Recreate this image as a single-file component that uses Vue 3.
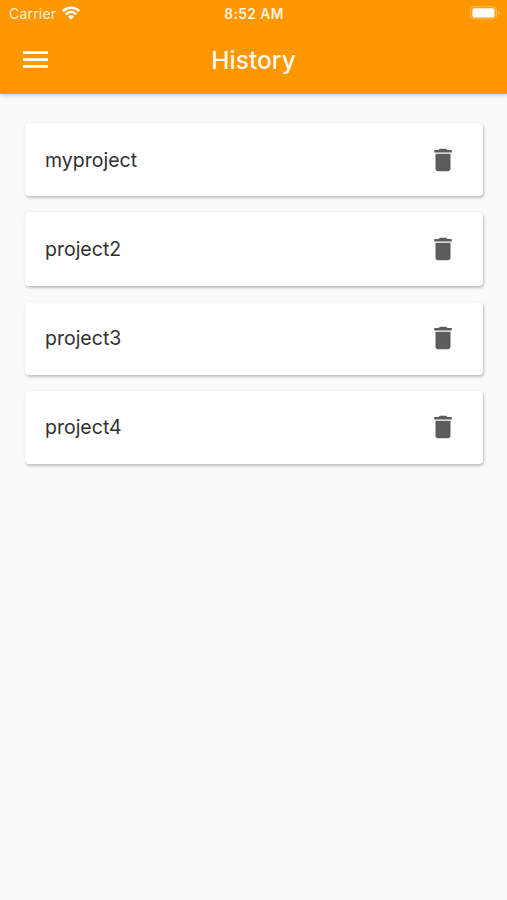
<script setup>
import { ref } from 'vue'

const projects = ref(['myproject', 'project2', 'project3', 'project4'])

function remove(index) {
  projects.value.splice(index, 1)
}
</script>

<template>
  <div class="screen">
    <header class="header">
      <div class="status">
        <div class="carrier">
          <span class="carrier-name">Carrier</span>
          <svg class="wifi" viewBox="0 0 18 14" fill="none" stroke="#fff" stroke-width="2.5">
            <path d="M0.9 5.1a11.5 11.5 0 0 1 16.2 0" />
            <path d="M3.8 8.3a7.3 7.3 0 0 1 10.4 0" />
            <path d="M9 13.8 6 10.8a4.3 4.3 0 0 1 6 0z" fill="#fff" stroke="none" />
          </svg>
        </div>
        <span class="time">8:52 AM</span>
        <div class="power">
          <svg class="battery" viewBox="0 0 30 14">
            <rect x="0.6" y="0.6" width="25.8" height="12.4" rx="3.6" fill="none" stroke="#fff" stroke-opacity="0.32" stroke-width="1.1" />
            <rect x="2.4" y="2.2" width="22.2" height="9.4" rx="1.8" fill="#fff" />
            <path d="M27.8 4.8v4q1.8-.6 1.8-2t-1.8-2z" fill="#fff" fill-opacity="0.35" />
          </svg>
        </div>
      </div>
      <div class="toolbar">
        <button class="menu" aria-label="Menu">
          <svg viewBox="0 0 24 24"><path d="M3 18h18v-2H3v2zm0-5h18v-2H3v2zm0-7v2h18V6H3z" /></svg>
        </button>
        <h1 class="title">History</h1>
      </div>
    </header>
    <main class="list">
      <div v-for="(project, index) in projects" :key="project" class="card">
        <span class="name">{{ project }}</span>
        <button class="delete" aria-label="Delete" @click="remove(index)">
          <svg viewBox="0 0 24 24"><path d="M6 19c0 1.1.9 2 2 2h8c1.1 0 2-.9 2-2V7H6v12zM19 4h-3.5l-1-1h-5l-1 1H5v2h14V4z" /></svg>
        </button>
      </div>
    </main>
  </div>
</template>

<style>
body {
  background: #fafafa;
}
</style>

<style scoped>
.screen {
  min-height: 900px;
  background: #fafafa;
  font-family: Inter, "Liberation Sans", sans-serif;
}
.header {
  height: 93.5px;
  background: #ff9800;
  color: #fff;
  box-shadow: 0 1px 5px rgba(0, 0, 0, 0.24);
}
.status {
  height: 27px;
  padding: 0 8px 0 9px;
  display: grid;
  grid-template-columns: 1fr auto 1fr;
  align-items: center;
  box-sizing: border-box;
}
.carrier {
  display: flex;
  align-items: center;
  gap: 5.5px;
}
.carrier-name {
  font-size: 14px;
  line-height: 27px;
  letter-spacing: 0.2px;
  color: rgba(255, 255, 255, 0.85);
}
.wifi {
  width: 18px;
  height: 14px;
  margin-bottom: 2px;
}
.time {
  font-size: 13.8px;
  font-weight: 600;
  letter-spacing: 0.4px;
  color: rgba(255, 255, 255, 0.88);
}
.power {
  display: flex;
  justify-content: flex-end;
}
.battery {
  width: 30px;
  height: 14px;
  margin: 0 -0.5px 1px 0;
}
.toolbar {
  display: grid;
  grid-template-columns: 1fr auto 1fr;
  align-items: center;
  height: 65px;
  padding: 0 18.5px;
}
button {
  display: flex;
  padding: 0;
  border: 0;
  background: none;
}
.menu svg {
  width: 33px;
  height: 33px;
  fill: #fff;
}
.title {
  margin: 0;
  font-size: 24.5px;
  line-height: 32px;
  font-weight: 500;
  color: rgba(255, 255, 255, 0.94);
}
.list {
  display: flex;
  flex-direction: column;
  gap: 16px;
  padding: 29.5px 24.5px 0 25px;
}
.card {
  display: flex;
  align-items: center;
  justify-content: space-between;
  height: 73.25px;
  padding: 0 24.5px 0 20px;
  box-sizing: border-box;
  border-radius: 4px;
  background: #fff;
  box-shadow: 1px 2px 3px rgba(0, 0, 0, 0.22), 0 0 2px rgba(0, 0, 0, 0.08);
}
.name {
  font-size: 19.5px;
  line-height: 28px;
  color: #303030;
}
.delete svg {
  width: 30px;
  height: 30px;
  fill: #5c5c5c;
}
</style>
